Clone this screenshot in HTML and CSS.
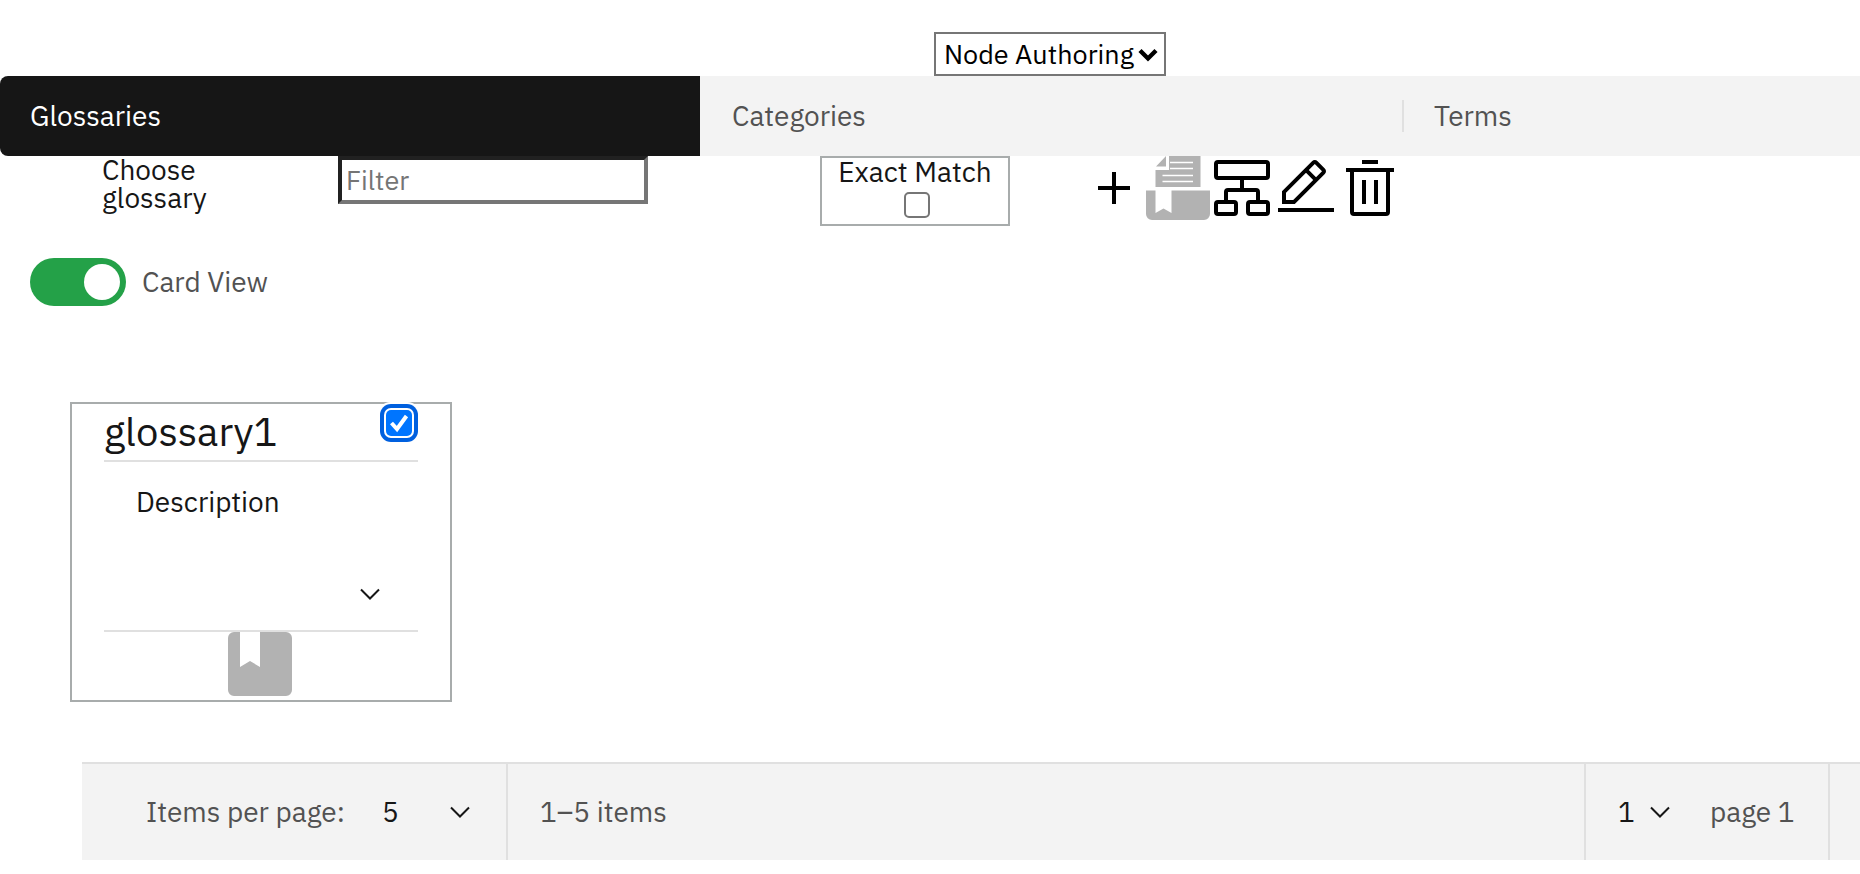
FILE: index.html
```html
<!DOCTYPE html>
<html lang="en">
<head>
<meta charset="utf-8">
<title>Glossary Author</title>
<link rel="stylesheet" href="styles.css">
</head>
<body>
<header class="view-bar">
  <div class="select-wrap">
    <select class="view-select" aria-label="View"><option>Node Authoring</option></select>
    <svg class="view-arrow" viewBox="0 0 20 14" aria-hidden="true"><path d="M2 2.500l8 8 8-8" fill="none" stroke="#000" stroke-width="4.400"/></svg>
  </div>
</header>
<nav class="tabs" role="tablist">
  <button class="tab tab-selected" role="tab" aria-selected="true">Glossaries</button>
  <button class="tab" role="tab" aria-selected="false">Categories</button>
  <button class="tab tab-divided" role="tab" aria-selected="false">Terms</button>
</nav>
<main>
  <section class="toolbar">
    <label class="filter-label" for="filter">Choose glossary</label>
    <input class="filter" id="filter" type="text" placeholder="Filter">
    <div class="exact">
      <label for="exact">Exact Match</label>
      <input class="check exact-check" id="exact" type="checkbox">
    </div>
    <div class="actions">
      <button class="action" aria-label="Add"><svg viewBox="0 0 32 32"><path d="M17 15V8h-2v7H8v2h7v7h2v-7h7v-2z"/></svg></button>
      <button class="action" aria-label="Categories"><svg viewBox="0 0 64 64"><path fill="#b2b2b2" d="M0 34.500H9.500V57L17.500 52.500 25.500 57V34.500H64V58a6 6 0 0 1-6 6H6a6 6 0 0 1-6-6z"/><path fill="#b2b2b2" d="M10 10.500L20 0v10.500zM23 0H54.500V31H9.500V14H23z"/><path d="M24 6.500h23M24 12.500h23M16.500 19.500h30.500M16.500 25.500h30.500" stroke="#fff" stroke-width="1.400"/></svg></button>
      <button class="action" aria-label="Hierarchy"><svg viewBox="0 0 32 32"><g fill="none" stroke="#000" stroke-width="2"><rect x="3" y="3" width="26" height="8" rx="1"/><rect x="3" y="23" width="10" height="6" rx="1"/><rect x="19" y="23" width="10" height="6" rx="1"/><path d="M16 11v6M8 23v-5a1 1 0 0 1 1-1h14a1 1 0 0 1 1 1v5"/></g></svg></button>
      <button class="action" aria-label="Edit"><svg viewBox="0 0 32 32"><path d="M2 26H30V28H2zM25.400 9c.8-.8.8-2 0-2.800l-3.600-3.600c-.8-.8-2-.8-2.800 0l-15 15V24h6.400L25.400 9zM20.400 4L24 7.600l-3 3L17.400 7 20.400 4zM6 22v-3.600l10-10 3.600 3.600-10 10H6z"/></svg></button>
      <button class="action" aria-label="Delete"><svg viewBox="0 0 32 32"><path d="M12 12h2v12h-2zM18 12h2v12h-2zM4 6v2h2v20a2 2 0 0 0 2 2h16a2 2 0 0 0 2-2V8h2V6zM8 28V8h16v20zM12 2h8v2h-8z"/></svg></button>
    </div>
  </section>
  <label class="toggle"><input class="toggle-input" type="checkbox" role="switch" checked><span>Card View</span></label>
  <section class="cards">
    <article class="card">
      <div class="card-head">
        <h2 class="card-title" id="g1">glossary1</h2>
        <input class="check card-check" type="checkbox" aria-labelledby="g1" checked>
      </div>
      <div class="card-body">
        <span>Description</span>
        <button class="expand" aria-label="Expand"><svg class="chevron" viewBox="0 0 20 12"><path d="M1 1.500l9 9 9-9"/></svg></button>
      </div>
      <div class="card-foot"><svg class="book" viewBox="0 0 64 64" aria-hidden="true"><path d="M6 0H12V35L22 29 32 35V0H58a6 6 0 0 1 6 6V58a6 6 0 0 1-6 6H6a6 6 0 0 1-6-6V6a6 6 0 0 1 6-6z"/></svg></div>
    </article>
  </section>
  <footer class="pagination">
    <div class="page-size">
      <label for="size">Items per page:</label>
      <div class="picker picker-size"><select id="size"><option>5</option></select><svg class="chevron" viewBox="0 0 20 12" aria-hidden="true"><path d="M1 1.500l9 9 9-9"/></svg></div>
    </div>
    <span class="range">1–5 items</span>
    <div class="page-number">
      <div class="picker picker-page"><select id="page"><option>1</option></select><svg class="chevron" viewBox="0 0 20 12" aria-hidden="true"><path d="M1 1.500l9 9 9-9"/></svg></div>
      <label for="page">page 1</label>
    </div>
    <div class="page-end"></div>
  </footer>
</main>
</body>
</html>
```
FILE: styles.css
```css
* { box-sizing: border-box; }
body {
  margin: 0;
  overflow-x: hidden;
  background: #fff;
  color: #161616;
  font: 28px/28px "IBM Plex Sans", "Open Sans", sans-serif;
}
button, input, select { font: inherit; color: inherit; margin: 0; border-radius: 0; }
button { background: none; border: 0; padding: 0; }
svg { display: block; }

.view-bar { display: flex; justify-content: center; padding: 32px 0 0 240px; }
.select-wrap { position: relative; }
.view-select {
  appearance: none;
  display: block;
  width: 232px;
  height: 44px;
  padding: 0 0 0 8px;
  border: 2px solid #767676;
  background: #fff;
  color: #000;
  font-size: 27px;
  line-height: 40px;
}
.view-arrow { position: absolute; right: 8px; top: 16px; width: 20px; height: 14px; pointer-events: none; }

.tabs { display: flex; overflow: hidden; }
.tab {
  position: relative;
  flex: 0 0 702px;
  height: 80px;
  padding: 0 32px;
  background: #f3f3f3;
  color: #525252;
  text-align: left;
}
.tab-selected { flex-basis: 700px; padding: 0 30px; background: #161616; color: #fff; border-radius: 8px 0 0 8px; }
.tab-divided::before { content: ""; position: absolute; left: 0; top: 24px; width: 2px; height: 32px; background: #e0e0e0; }

.toolbar { display: flex; align-items: flex-start; padding-left: 102px; }
.filter-label { width: 236px; padding-right: 120px; }
.filter { width: 310px; height: 48px; padding: 0 4px 2px; border: 4px inset #767676; background: #fff; font-size: 27px; }
.filter::placeholder { color: #757575; opacity: 1; }
.exact {
  display: flex;
  flex-direction: column;
  align-items: center;
  gap: 6px;
  width: 190px;
  height: 70px;
  margin-left: 172px;
  border: 2px solid #a8acac;
}
.check {
  appearance: none;
  flex: none;
  width: 26px;
  height: 26px;
  border: 2px solid #767676;
  border-radius: 5px;
  background: #fff;
}
.exact-check { margin-left: 4px; }
.actions { display: flex; margin-left: 72px; }
.action svg { width: 64px; height: 64px; }

.toggle { display: flex; width: max-content; align-items: center; gap: 16px; margin: 32px 0 0 30px; color: #525252; }
.toggle-input {
  appearance: none;
  display: flex;
  justify-content: flex-end;
  width: 96px;
  height: 48px;
  padding: 6px;
  border-radius: 24px;
  background: #24a148;
}
.toggle-input::before { content: ""; width: 36px; height: 36px; border-radius: 50%; background: #fff; }

.cards { padding: 96px 0 60px 70px; }
.card { width: 382px; padding: 0 32px; border: 2px solid #a8acac; }
.card-head { display: flex; justify-content: space-between; height: 58px; border-bottom: 2px solid #e0e0e0; }
.card-title { margin: 0; font-size: 40px; font-weight: 400; line-height: 54px; }
.card-check {
  margin: 6px;
  border: 0;
  background: #0075ff url("data:image/svg+xml,%3Csvg xmlns='http://www.w3.org/2000/svg' viewBox='0 0 26 26'%3E%3Cpath d='M5.500 13l5.500 6L20.500 6' fill='none' stroke='white' stroke-width='4'/%3E%3C/svg%3E");
  box-shadow: 0 0 0 2px #fff, 0 0 0 6px #0060df, 0 0 0 8px #fff;
}
.card-body {
  display: flex;
  flex-direction: column;
  justify-content: space-between;
  height: 170px;
  padding: 26px 32px 30px;
  border-bottom: 2px solid #e0e0e0;
}
.expand { align-self: flex-end; padding: 0 6px 0 0; }
.chevron { width: 20px; height: 12px; fill: none; stroke: #161616; stroke-width: 2; }
.card-foot { display: flex; justify-content: center; height: 68px; padding-right: 2px; }
.book { width: 64px; height: 64px; fill: #b2b2b2; }

.pagination {
  display: flex;
  margin-left: 82px;
  height: 98px;
  border-top: 2px solid #e0e0e0;
  background: #f3f3f3;
  color: #525252;
}
.page-size { display: flex; align-items: center; width: 426px; padding: 0 36px 0 64px; border-right: 2px solid #e0e0e0; }
.picker { position: relative; color: #161616; }
.picker select { appearance: none; display: block; height: 48px; padding: 0; border: 0; background: none; }
.picker .chevron { position: absolute; right: 0; top: 18px; pointer-events: none; }
.picker-size { margin-left: auto; }
.picker-size select { width: 88px; }
.picker-page select { width: 52px; }
.range { flex: 1; align-self: center; padding-left: 32px; }
.page-number { display: flex; align-items: center; gap: 40px; width: 246px; padding-left: 32px; border: solid #e0e0e0; border-width: 0 2px; }
.page-end { width: 30px; }
```
